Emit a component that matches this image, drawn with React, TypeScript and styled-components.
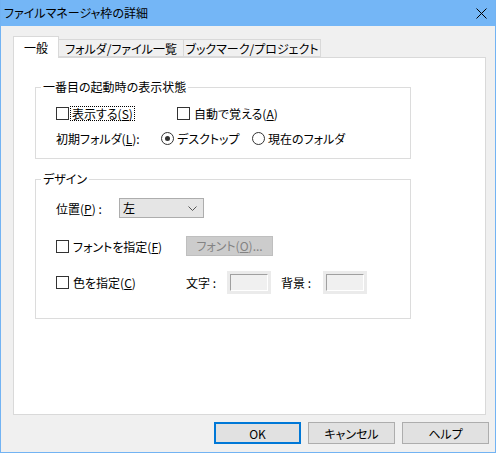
import React from "react";
import styled, { createGlobalStyle } from "styled-components";

const GlobalStyle = createGlobalStyle`
  html, body { margin: 0; padding: 0; background: #f0f0f0; }
  body {
    font-family: "Noto Sans CJK JP", "Noto Sans", sans-serif;
    font-size: 12px;
    color: #000;
    font-feature-settings: "palt";
  }
  * { box-sizing: border-box; }
`;

const Window = styled.div`
  width: 496px;
  height: 453px;
  display: flex;
  flex-direction: column;
  background: #f0f0f0;
  border: 1px solid #72b3f3;
  border-top: none;
`;

const TitleBar = styled.div`
  height: 26px;
  flex: none;
  display: flex;
  align-items: center;
  justify-content: space-between;
  background: #74b6f6;
  padding-left: 3px;
`;

const TitleText = styled.span`
  font-size: 12px;
  line-height: 16px;
  color: #000;
`;

const CloseBox = styled.div`
  width: 28px;
  height: 26px;
  display: flex;
  align-items: center;
  justify-content: center;
`;

const Body = styled.div`
  flex: 1;
  display: flex;
  flex-direction: column;
  padding: 10px 6px 8px 12px;
`;

const TabStrip = styled.div`
  display: flex;
  align-items: flex-end;
  height: 21px;
`;

const Tab = styled.div<{ $w: number; $active?: boolean }>`
  width: ${(p) => p.$w}px;
  height: ${(p) => (p.$active ? 22 : 18)}px;
  margin-left: ${(p) => (p.$active ? 0 : -1)}px;
  margin-bottom: ${(p) => (p.$active ? -1 : 0)}px;
  position: relative;
  z-index: ${(p) => (p.$active ? 2 : 1)};
  background: ${(p) => (p.$active ? "#ffffff" : "#f0f0f0")};
  border: 1px solid #d9d9d9;
  border-bottom: ${(p) => (p.$active ? "none" : "1px solid #d9d9d9")};
  display: flex;
  justify-content: center;
  align-items: ${(p) => (p.$active ? "center" : "flex-start")};
  padding-top: ${(p) => (p.$active ? 0 : 2)}px;
  line-height: 14px;
  white-space: nowrap;
`;

const Panel = styled.div`
  width: 473px;
  height: 358px;
  flex: none;
  background: #fff;
  border: 1px solid #d9d9d9;
  padding: 22px 0 0 21px;
  display: flex;
  flex-direction: column;
`;

const Group = styled.fieldset<{ $mt?: number }>`
  width: 376px;
  margin: ${(p) => p.$mt ?? 0}px 0 0 0;
  padding: 0;
  min-width: 0;
  border: 1px solid #dcdcdc;
`;

const Legend = styled.legend`
  margin-left: 5px;
  padding: 0 2px;
  height: 14px;
  line-height: 14px;
  font-size: 12px;
`;

const GroupBody = styled.div<{ $pt: number; $pb: number }>`
  padding: ${(p) => p.$pt}px 0 ${(p) => p.$pb}px 20px;
  display: flex;
  flex-direction: column;
`;

const Row = styled.div<{ $h: number; $mt?: number }>`
  height: ${(p) => p.$h}px;
  margin-top: ${(p) => p.$mt ?? 0}px;
  display: flex;
  align-items: center;
`;

const Item = styled.div<{ $w?: number }>`
  ${(p) => (p.$w ? `width: ${p.$w}px;` : "")}
  flex: none;
  display: flex;
  align-items: center;
  white-space: nowrap;
`;

const Box = styled.span`
  width: 13px;
  height: 13px;
  flex: none;
  border: 1px solid #333;
  background: #fff;
`;

const Radio = styled.span<{ $on?: boolean }>`
  width: 13px;
  height: 13px;
  flex: none;
  border: 1px solid #333;
  border-radius: 50%;
  background: #fff;
  display: flex;
  align-items: center;
  justify-content: center;
  &::after {
    content: "";
    width: 5px;
    height: 5px;
    border-radius: 50%;
    background: ${(p) => (p.$on ? "#333" : "transparent")};
  }
`;

const Caption = styled.span<{ $focus?: boolean; $gap?: number }>`
  margin-left: ${(p) => p.$gap ?? 1}px;
  padding: 0 1px;
  line-height: 13px;
  border: 1px ${(p) => (p.$focus ? "dotted #000" : "solid transparent")};
`;

const U = styled.span`
  text-decoration: underline;
  text-underline-offset: 1px;
`;

const Select = styled.div`
  width: 85px;
  height: 20px;
  flex: none;
  border: 1px solid #adadad;
  background: #e5e5e5;
  display: flex;
  align-items: center;
  justify-content: space-between;
  padding: 0 6px 0 3px;
  line-height: 14px;
`;

const DisabledButton = styled.div`
  width: 87px;
  height: 20px;
  flex: none;
  background: #cccccc;
  border: 1px solid #bfbfbf;
  color: #838383;
  display: flex;
  align-items: center;
  justify-content: center;
  line-height: 14px;
`;

const Swatch = styled.div`
  width: 44px;
  height: 23px;
  flex: none;
  background: #ebebeb;
  padding: 3px;
  display: flex;
`;

const SwatchInner = styled.div`
  flex: 1;
  background: #f0f0f0;
  border-top: 1px solid #a0a0a0;
  border-left: 1px solid #a0a0a0;
  border-right: 1px solid #ffffff;
  border-bottom: 1px solid #ffffff;
`;

const ButtonRow = styled.div`
  margin-top: 7px;
  display: flex;
  justify-content: flex-end;
  gap: 7px;
`;

const Button = styled.button<{ $default?: boolean }>`
  width: 87px;
  height: 22px;
  margin: 0;
  padding: 0;
  font: inherit;
  font-size: 12px;
  color: #000;
  background: #e1e1e1;
  border: ${(p) => (p.$default ? "2px solid #0078d7" : "1px solid #adadad")};
  display: flex;
  align-items: center;
  justify-content: center;
`;

const Chevron = () => (
  <svg width="9" height="5" viewBox="0 0 9 5">
    <path d="M0.5 0.5 L4.5 4.5 L8.5 0.5" fill="none" stroke="#555" strokeWidth="1" />
  </svg>
);

const CloseIcon = () => (
  <svg width="11" height="11" viewBox="0 0 11 11">
    <path d="M0.5 0.5 L10.5 10.5 M10.5 0.5 L0.5 10.5" stroke="#000" strokeWidth="1" />
  </svg>
);

export default function App() {
  return (
    <>
      <GlobalStyle />
      <Window>
        <TitleBar>
          <TitleText>ファイルマネージャ枠の詳細</TitleText>
          <CloseBox>
            <CloseIcon />
          </CloseBox>
        </TitleBar>
        <Body>
          <TabStrip>
            <Tab $w={46} $active>
              一般
            </Tab>
            <Tab $w={126}>フォルダ/ファイル一覧</Tab>
            <Tab $w={138}>ブックマーク/プロジェクト</Tab>
          </TabStrip>
          <Panel>
            <Group>
              <Legend>一番目の起動時の表示状態</Legend>
              <GroupBody $pt={9} $pb={10}>
                <Row $h={20}>
                  <Item $w={121}>
                    <Box />
                    <Caption $focus>
                      表示する(<U>S</U>)
                    </Caption>
                  </Item>
                  <Item>
                    <Box />
                    <Caption $gap={2}>
                      自動で覚える(<U>A</U>)
                    </Caption>
                  </Item>
                </Row>
                <Row $h={20} $mt={5}>
                  <Item $w={105}>
                    初期フォルダ(<U>L</U>):
                  </Item>
                  <Item $w={91}>
                    <Radio $on />
                    <Caption>デスクトップ</Caption>
                  </Item>
                  <Item>
                    <Radio />
                    <Caption>現在のフォルダ</Caption>
                  </Item>
                </Row>
              </GroupBody>
            </Group>
            <Group $mt={13}>
              <Legend>デザイン</Legend>
              <GroupBody $pt={12} $pb={24}>
                <Row $h={20}>
                  <Item $w={63}>
                    位置(<U>P</U>) :
                  </Item>
                  <Select>
                    <span>左</span>
                    <Chevron />
                  </Select>
                </Row>
                <Row $h={20} $mt={18}>
                  <Item $w={130}>
                    <Box />
                    <Caption $gap={2}>
                      フォントを指定(<U>F</U>)
                    </Caption>
                  </Item>
                  <DisabledButton>
                    フォント(<U>O</U>)...
                  </DisabledButton>
                </Row>
                <Row $h={23} $mt={15}>
                  <Item $w={130}>
                    <Box />
                    <Caption $gap={2}>
                      色を指定(<U>C</U>)
                    </Caption>
                  </Item>
                  <Item $w={41}>文字 :</Item>
                  <Swatch>
                    <SwatchInner />
                  </Swatch>
                  <Item $w={42} style={{ marginLeft: 10 }}>
                    背景 :
                  </Item>
                  <Swatch>
                    <SwatchInner />
                  </Swatch>
                </Row>
              </GroupBody>
            </Group>
          </Panel>
          <ButtonRow>
            <Button $default>OK</Button>
            <Button>キャンセル</Button>
            <Button>ヘルプ</Button>
          </ButtonRow>
        </Body>
      </Window>
    </>
  );
}
